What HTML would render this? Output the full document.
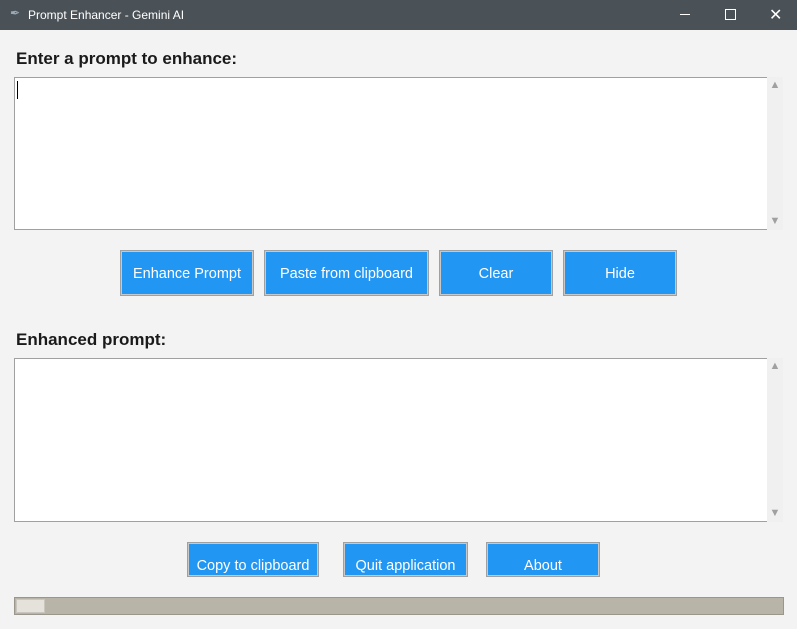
<!DOCTYPE html>
<html><head><style>
body{margin:0;width:797px;height:629px;background:#f3f3f3;font-family:"Liberation Sans",sans-serif;position:relative;overflow:hidden}
.a{position:absolute}
.tb{left:0;top:0;width:797px;height:30px;background:#4b5257;color:#fff;font-size:12px}
.lbl{font-weight:bold;font-size:17px;color:#1a1a1a}
.txt{background:#fff;border:1px solid #a0a0a0;box-sizing:border-box}
.sb{background:#f0f0f0;width:16px}
.btn{background:#2196f3;border:1px solid #a0a0a0;box-shadow:inset 0 0 0 1px #c8c8c8;box-sizing:border-box;color:#fff;font-size:14.5px;text-align:center}
.arr{font-size:11px;color:#a0a0a0;width:16px;text-align:center}
</style></head><body>
<div class="a tb">
<span class="a" style="left:10px;top:6px;color:#9ab;font-size:12px">✒</span>
<span class="a" style="left:28px;top:8px">Prompt Enhancer - Gemini AI</span>
<span class="a" style="left:680px;top:14px;width:10px;height:1px;background:#fff"></span>
<span class="a" style="left:725px;top:9px;width:9px;height:9px;border:1px solid #fff"></span>
<span class="a" style="left:769px;top:5px;font-size:16px">✕</span>
</div>
<div class="a lbl" style="left:16px;top:49px">Enter a prompt to enhance:</div>
<div class="a txt" style="left:14px;top:77px;width:754px;height:153px"><div class="a" style="left:2px;top:3px;width:1px;height:18px;background:#000"></div></div>
<div class="a sb" style="left:767px;top:77px;height:153px"></div>
<div class="a arr" style="left:767px;top:79px">▲</div><div class="a arr" style="left:767px;top:215px">▼</div>
<div class="a btn" style="left:120px;top:250px;width:134px;height:46px;line-height:46px">Enhance Prompt</div>
<div class="a btn" style="left:264px;top:250px;width:165px;height:46px;line-height:46px">Paste from clipboard</div>
<div class="a btn" style="left:439px;top:250px;width:114px;height:46px;line-height:46px">Clear</div>
<div class="a btn" style="left:563px;top:250px;width:114px;height:46px;line-height:46px">Hide</div>
<div class="a lbl" style="left:16px;top:330px">Enhanced prompt:</div>
<div class="a txt" style="left:14px;top:358px;width:754px;height:164px"></div>
<div class="a sb" style="left:767px;top:358px;height:164px"></div>
<div class="a arr" style="left:767px;top:360px">▲</div><div class="a arr" style="left:767px;top:507px">▼</div>
<div class="a btn" style="left:187px;top:542px;width:132px;height:35px;line-height:46px">Copy to clipboard</div>
<div class="a btn" style="left:343px;top:542px;width:125px;height:35px;line-height:46px">Quit application</div>
<div class="a btn" style="left:486px;top:542px;width:114px;height:35px;line-height:46px">About</div>
<div class="a" style="left:14px;top:597px;width:770px;height:18px;background:#b8b4a8;border:1px solid #9a968c;box-sizing:border-box"></div>
<div class="a" style="left:16px;top:599px;width:29px;height:14px;background:#e4e2da;border:1px solid #c8c6be;box-sizing:border-box"></div>
</body></html>
